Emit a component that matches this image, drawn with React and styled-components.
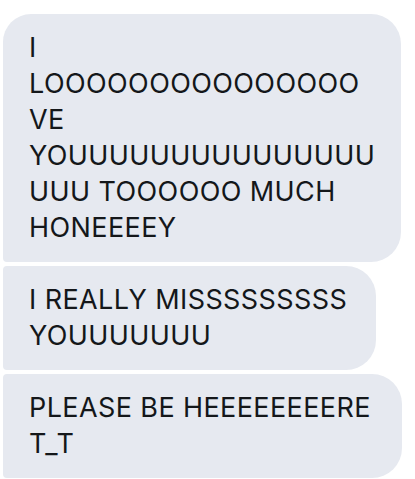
import React from 'react';
import styled, { createGlobalStyle } from 'styled-components';

const GlobalStyle = createGlobalStyle`
  html, body {
    margin: 0;
    padding: 0;
    background: #ffffff;
  }
`;

const Thread = styled.div`
  display: flex;
  flex-direction: column;
  align-items: flex-start;
  gap: 4px;
  padding: 14px 0 0 3px;
  font-family: Inter, "Liberation Sans", sans-serif;
`;

const Bubble = styled.div`
  box-sizing: border-box;
  width: ${({ $width }) => $width}px;
  padding: 16px 20px 16px 26px;
  background: #e6e9f0;
  color: #14171a;
  font-size: 27px;
  line-height: 36px;
  letter-spacing: 0.4px;
  border-radius: ${({ $first }) => ($first ? '28px' : '4px')} 30px 30px 4px;
`;

const Line = styled.div`
  white-space: nowrap;
`;

const messages = [
  {
    width: 398,
    first: true,
    lines: [
      'I',
      'LOOOOOOOOOOOOOOO',
      'VE',
      'YOUUUUUUUUUUUUUUU',
      'UUU TOOOOOO MUCH',
      'HONEEEEY',
    ],
  },
  {
    width: 373,
    lines: ['I REALLY MISSSSSSSSS', 'YOUUUUUUU'],
  },
  {
    width: 399,
    lines: ['PLEASE BE HEEEEEEEERE', 'T_T'],
  },
];

const App = () => {
  return (
    <>
      <GlobalStyle />
      <Thread>
        {messages.map((msg, index) => (
          <Bubble key={index} $width={msg.width} $first={msg.first}>
            {msg.lines.map((line, i) => (
              <Line key={i}>{line}</Line>
            ))}
          </Bubble>
        ))}
      </Thread>
    </>
  );
};

export default App;
